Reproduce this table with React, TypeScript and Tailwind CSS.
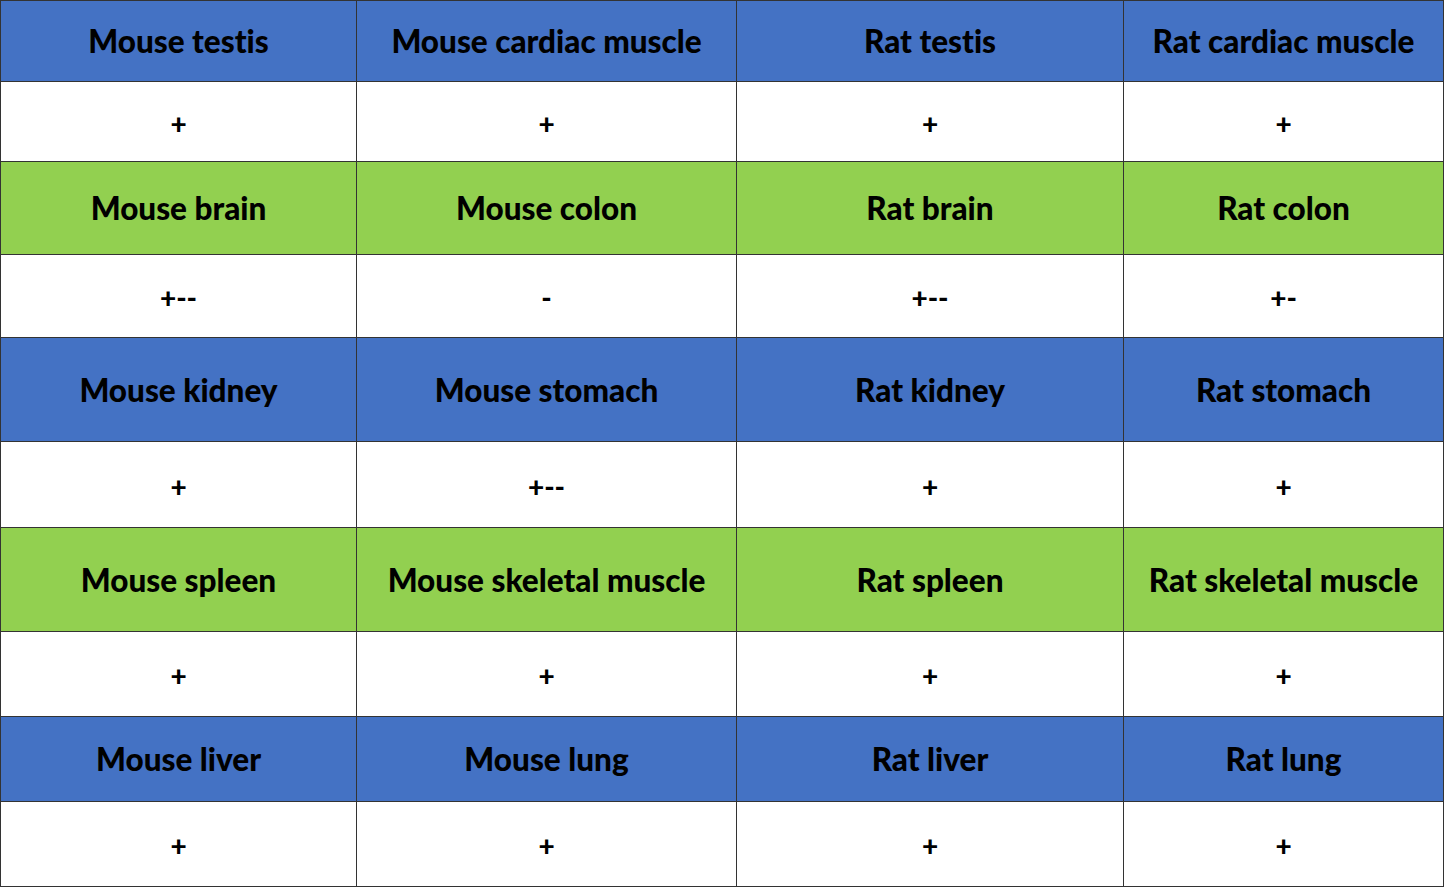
const rows: { kind: "blue" | "green" | "value"; cells: string[] }[] = [
  { kind: "blue", cells: ["Mouse testis", "Mouse cardiac muscle", "Rat testis", "Rat cardiac muscle"] },
  { kind: "value", cells: ["+", "+", "+", "+"] },
  { kind: "green", cells: ["Mouse brain", "Mouse colon", "Rat brain", "Rat colon"] },
  { kind: "value", cells: ["+--", "-", "+--", "+-"] },
  { kind: "blue", cells: ["Mouse kidney", "Mouse stomach", "Rat kidney", "Rat stomach"] },
  { kind: "value", cells: ["+", "+--", "+", "+"] },
  { kind: "green", cells: ["Mouse spleen", "Mouse skeletal muscle", "Rat spleen", "Rat skeletal muscle"] },
  { kind: "value", cells: ["+", "+", "+", "+"] },
  { kind: "blue", cells: ["Mouse liver", "Mouse lung", "Rat liver", "Rat lung"] },
  { kind: "value", cells: ["+", "+", "+", "+"] },
];

const bgFor = {
  blue: "bg-[#4472c4]",
  green: "bg-[#92d050]",
  value: "bg-white",
};

export default function App() {
  return (
    <div className="min-h-screen bg-white">
      <div
        className="grid w-[1444px] grid-cols-[355px_379px_386px_319px] grid-rows-[80px_79px_92px_82px_103px_85px_103px_84px_84px_84px] gap-px bg-[#333333] p-px text-black [font-variant-ligatures:none]"
        style={{ fontFamily: "Lato, 'Open Sans', sans-serif" }}
      >
        {rows.map((row, ri) =>
          row.cells.map((text, ci) => (
            <div
              key={`${ri}-${ci}`}
              className={`flex items-center justify-center ${bgFor[row.kind]} ${
                row.kind === "value" ? "pt-0.5 text-[28px] font-black" : "pt-0.5 text-[31.5px] font-black"
              }`}
            >
              {text}
            </div>
          ))
        )}
      </div>
    </div>
  );
}
